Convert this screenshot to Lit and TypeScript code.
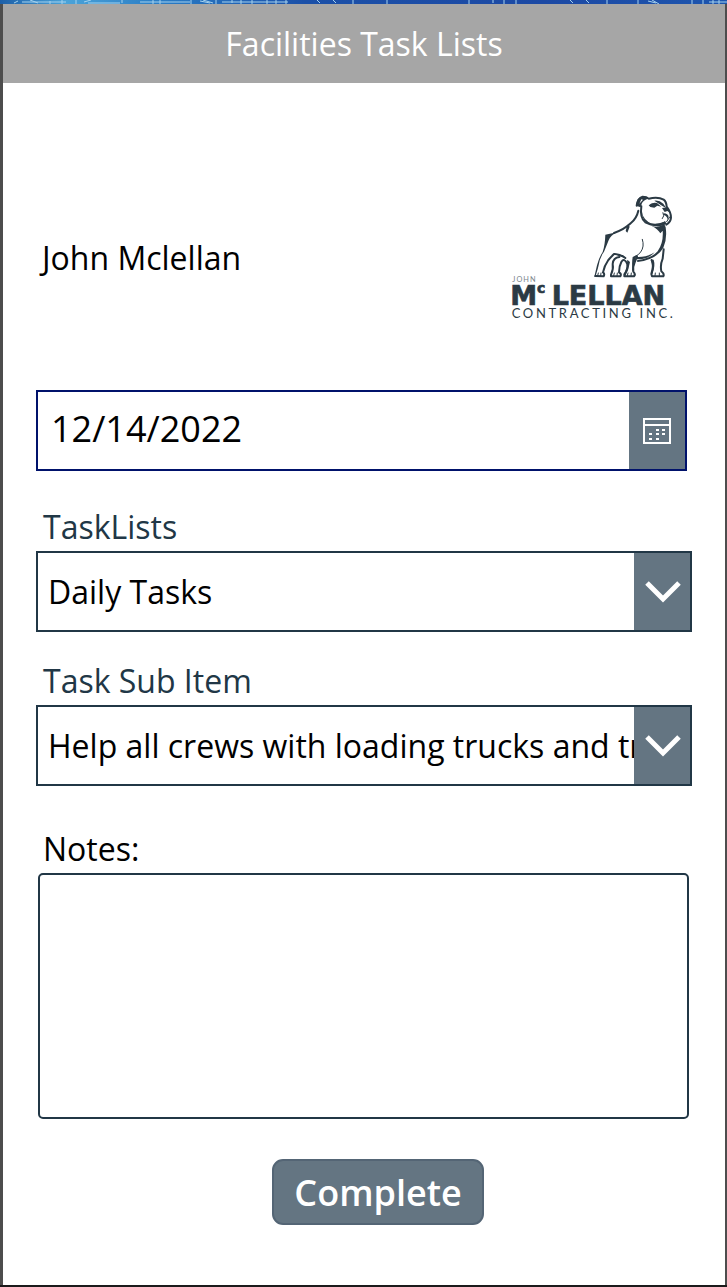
import { LitElement, html, css, svg } from "lit";
import { customElement, state, property } from "lit/decorators.js";

@customElement("company-logo")
class CompanyLogo extends LitElement {
  static styles = css`
    :host { display: block; width: 165px; }
    .art { display: block; width: 100%; overflow: visible; }
    .ink { fill: #2b3a44; }
    .line { fill: none; stroke: #2b3a44; stroke-width: 6; stroke-linecap: round; stroke-linejoin: round; }
    .thin { stroke-width: 3; }
    .word { font-family: Lato, "Open Sans", sans-serif; fill: #2b3a44; }
    .first { font-size: 22px; fill: #7b858b; letter-spacing: 3px; }
    .name, .small { font-family: "DejaVu Sans", sans-serif; font-weight: 700; stroke: #2b3a44; stroke-width: 2; }
    .name { font-size: 81px; }
    .small { font-size: 42px; }
    .trade { font-size: 39px; letter-spacing: 8px; }
  `;

  render() {
    return html`
      <svg class="art" viewBox="33 30 495 375" role="img" aria-label="John McLellan Contracting Inc.">
        ${svg`
          <path class="line" d="M410 62 Q412 40 428 35 Q440 35 446 41 Q474 34 491 44 Q499 50 500 65 Q513 82 513 98 Q512 112 499 119"/>
          <path class="ink" d="M408 62 L413 43 Q422 33 437 35 L447 41 Q432 43 426 54 L422 67 Z M424 43 L418 56 L429 44 Z" fill-rule="evenodd"/>
          <path class="line" d="M424 64 Q419 98 436 112 Q462 126 492 114"/>
          <path class="ink" d="M426 82 Q430 106 455 116 Q480 120 495 108 L500 116 Q482 128 452 121 Q425 109 426 82 Z"/>
          <path class="ink" d="M446 61 Q455 51 471 54 L484 65 L472 62 L463 68 L451 66 Z M463 47 Q478 45 490 56 L499 70 L486 62 Z M486 69 L501 67 L508 82 L502 78 L494 81 Z M491 85 Q504 85 506 96 L503 105 Q503 95 491 89 Z"/>
          <path class="line thin" d="M459 57 L466 62 M489 83 Q495 93 487 101 M509 96 L500 110"/>
          <path class="line" d="M415 77 Q410 100 392 115 Q372 134 342 144"/>
          <path class="ink" d="M384 118 L389 125 L382 143 L377 138 L380 126 Z M316 149 L350 142 Q332 151 326 166 Q319 184 312 200 Q298 219 294 249 L286 276 L283 275 L291 241 Q297 217 308 201 Q315 180 316 149 Z"/>
          <path class="line" d="M286 273 L311 274 Q315 266 309 262 Q313 242 325 225 Q333 216 342 207 M344 207 Q363 208 376 219"/>
          <path class="line" d="M358 216 Q340 217 338 237 Q341 253 333 269 L333 274 L361 274 Q366 267 357 262 Q357 244 364 231 Q373 217 382 237 Q385 252 373 268 L373 274 L402 274 Q408 268 400 260 Q397 247 404 232 L411 214"/>
          <path class="ink" d="M382 224 L390 231 Q386 255 376 273 L373 267 Q382 247 382 224 Z M340 206 L357 207 L378 220 L356 213 Z M398 216 L410 210 L400 242 L399 259 Q394 240 398 216 Z"/>
          <path class="line thin" d="M427 163 Q434 185 422 201 Q416 210 405 215"/>
          <path class="ink" d="M454 122 Q474 130 493 118 L497 127 Q502 163 490 188 Q470 224 412 231 L411 226 Q456 219 473 199 Q491 174 488 137 L481 145 Q475 133 454 122 Z M411 216 Q442 217 464 202 Q444 224 411 223 Z"/>
          <path class="line" d="M455 225 Q461 239 457 254 L454 267 L456 274 L490 274 Q494 267 484 259 Q480 240 488 221 L491 193"/>
          <path class="ink" d="M452 225 L461 224 Q467 242 457 268 L454 264 Q461 244 452 225 Z"/>
          <path class="line thin" d="M295 264 L293 272 M303 264 L302 272 M343 264 L341 272 M352 264 L351 272 M384 264 L382 272 M394 264 L393 272 M466 264 L465 272 M478 264 L478 272"/>
        `}
        <text class="word first" x="37" y="290">JOHN</text>
        <text class="word name" x="31" y="359">M</text>
        <text class="word small" x="111" y="323">c</text>
        <text class="word name" x="155" y="359">LELLAN</text>
        <text class="word trade" x="35" y="400">CONTRACTING INC.</text>
      </svg>
    `;
  }
}

@customElement("drop-field")
class DropField extends LitElement {
  @property() label = "";
  @property({ attribute: false }) options: string[] = [];

  static styles = css`
    :host { display: block; color: #213746; }
    .label { display: block; padding-left: 7px; font-size: 32px; line-height: 48px; }
    .box { display: grid; grid-template-columns: minmax(0, 1fr) 56px; height: 81px; box-sizing: border-box; border: 2px solid #213746; background: #fff; }
    .select { grid-area: 1 / 1 / 2 / 3; width: 100%; margin: 0; padding: 0 56px 0 10px; appearance: none; border: 0; border-radius: 0; outline: 0; background: transparent; color: #000; font: inherit; font-size: 32px; }
    .arrow { grid-area: 1 / 2; display: grid; place-items: center; padding-left: 2px; pointer-events: none; background: #647582; }
    .chevron { width: 36px; height: 24px; fill: none; stroke: #fff; stroke-width: 5; }
  `;

  render() {
    return html`
      <label class="label" for="choice">${this.label}</label>
      <div class="box">
        <select class="select" id="choice">
          ${this.options.map((option) => html`<option>${option}</option>`)}
        </select>
        <span class="arrow">
          <svg class="chevron" viewBox="0 0 36 24" aria-hidden="true"><path d="M2 3 L18 19 L34 3"/></svg>
        </span>
      </div>
    `;
  }
}

@customElement("app-root")
class AppRoot extends LitElement {
  @state() private date = "12/14/2022";

  static styles = css`
    :host { display: block; font-family: "Open Sans", sans-serif; color: #000; }
    .page { display: flex; flex-direction: column; min-height: 100vh; }
    .strip { display: block; width: 100%; height: 4px; background: linear-gradient(90deg, #1c5fa8, #4ba3d8 9%, #2a7cc4 22%, #1b50a8 42%, #1c49a4 75%, #1d55ae); }
    .marks { fill: none; stroke: #a5d2ee; stroke-width: 1; }
    .screen { flex: 1; display: flex; flex-direction: column; box-sizing: border-box; border: solid #4d4d4d; border-width: 0 2px 0 3px; background: #fff; }
    .base { height: 2px; background: #1b1a1b; }
    .bar { background: #a6a6a6; color: #fff; text-align: center; }
    .title { margin: 0; font-size: 32px; line-height: 79px; font-weight: 400; }
    .form { display: flex; flex-direction: column; padding: 112px 33px 60px; }
    .profile { display: flex; align-items: center; justify-content: space-between; padding: 0 16px 0 6px; margin-bottom: 70px; font-size: 32px; }
    .date { display: grid; grid-template-columns: minmax(0, 1fr) 56px; height: 81px; box-sizing: border-box; margin: 0 5px 32px 0; border: 2px solid #00126b; }
    .day { box-sizing: border-box; width: 100%; padding: 0 13px 4px; border: 0; outline: 0; background: #fff; color: #000; font: inherit; font-size: 36px; }
    .pick { display: grid; place-items: center; padding: 0; border: 0; background: #647582; }
    .calendar { width: 28px; height: 26px; }
    .field { margin-bottom: 25px; }
    .last { margin-bottom: 39px; }
    .label { padding-left: 7px; font-size: 32px; line-height: 48px; }
    .notes { box-sizing: border-box; height: 246px; margin: 0 3px 40px 2px; padding: 12px; resize: none; border: 2px solid #213746; border-radius: 5px; outline: 0; font: inherit; font-size: 32px; }
    .done { align-self: center; margin-left: 28px; box-sizing: border-box; height: 66px; padding: 0 20px; border: 2px solid #546575; border-radius: 11px; background: #647582; color: #fff; font: inherit; font-size: 36px; font-weight: 600; }
  `;

  render() {
    return html`
      <div class="page">
        <svg class="strip" viewBox="0 0 727 4" preserveAspectRatio="none" aria-hidden="true">
          <path class="marks" d="M14 3 L18 1 M22 2 H66 M30 0 L38 3 M50 1 V4 M62 0 V4 M76 0 V4 M84 2 L91 0 M88 3 H120 M122 0 V3 M140 2 H190 M153 0 V4 M160 0 V4 M191 0 V4 M200 1 L210 3 M203 0 L213 3 M216 0 V4 M222 2 H288 M232 0 V3 M241 0 V4 M252 0 V4 M267 0 V4 M276 0 V4 M286 0 V4 M317 0 L320 3 M333 0 L336 3 M353 0 V4 M387 0 V4 M469 0 V4 M493 0 V3 M504 0 V4 M516 0 V4 M570 0 L573 3 M586 0 L589 3 M607 0 V4 M638 0 V4 M648 1 L656 3 M652 0 L659 4 M692 0 V4 M703 0 V4 M709 2 H727 M713 0 V4 M719 0 V4"/>
        </svg>
        <div class="screen">
          <header class="bar"><h1 class="title">Facilities Task Lists</h1></header>
          <main class="form">
            <div class="profile">
              <span>John Mclellan</span>
              <company-logo></company-logo>
            </div>
            <div class="date">
              <input class="day" type="text" aria-label="Date" .value=${this.date}
                @input=${(e: Event) => (this.date = (e.target as HTMLInputElement).value)} />
              <button class="pick" type="button" aria-label="Open calendar">
                <svg class="calendar" viewBox="0 0 28 26" aria-hidden="true">
                  <path d="M1 1 H27 V25 H1 Z M1 7 H27" fill="none" stroke="#fff" stroke-width="2"/>
                  <path d="M13 11h3v2h-3z M19 11h3v2h-3z M6 15h3v2h-3z M13 15h3v2h-3z M19 15h3v2h-3z M6 20h3v2h-3z M13 20h3v2h-3z" fill="#fff"/>
                </svg>
              </button>
            </div>
            <drop-field class="field" label="TaskLists" .options=${["Daily Tasks"]}></drop-field>
            <drop-field class="field last" label="Task Sub Item"
              .options=${["Help all crews with loading trucks and trailers"]}></drop-field>
            <label class="label" for="notes">Notes:</label>
            <textarea class="notes" id="notes"></textarea>
            <button class="done" type="button">Complete</button>
          </main>
        </div>
        <div class="base"></div>
      </div>
    `;
  }
}
